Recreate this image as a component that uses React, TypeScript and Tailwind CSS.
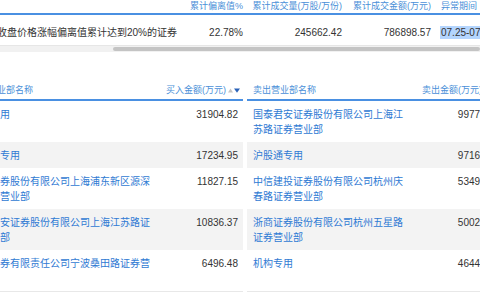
import React from "react";

const FONT = { fontFamily: '"Liberation Sans", "Noto Sans CJK SC", sans-serif' };

type Row = { buyName: string; buy: string; sellName: string; sell: string };

const ROWS: Row[] = [
  { buyName: "机构专用", buy: "31904.82", sellName: "国泰君安证券股份有限公司上海江苏路证券营业部", sell: "9977.36" },
  { buyName: "沪股通专用", buy: "17234.95", sellName: "沪股通专用", sell: "9716.28" },
  { buyName: "海通证券股份有限公司上海浦东新区源深路证券营业部", buy: "11827.15", sellName: "中信建投证券股份有限公司杭州庆春路证券营业部", sell: "5349.71" },
  { buyName: "国泰君安证券股份有限公司上海江苏路证券营业部", buy: "10836.37", sellName: "浙商证券股份有限公司杭州五星路证券营业部", sell: "5002.64" },
  { buyName: "华鑫证券有限责任公司宁波桑田路证券营业部", buy: "6496.48", sellName: "机构专用", sell: "4644.90" },
];

function SortIcon() {
  return (
    <span className="inline-flex items-center gap-[1px] ml-[2px] align-middle">
      <svg width="5" height="5" viewBox="0 0 5 5">
        <path d="M2.5 0.5 L5 4.5 L0 4.5 Z" fill="#c4c4c4" />
      </svg>
      <svg width="6" height="5" viewBox="0 0 6 5">
        <path d="M0 0.5 L6 0.5 L3 4.8 Z" fill="#2a62b8" />
      </svg>
    </span>
  );
}

export default function App() {
  return (
    <div className="w-[480px] h-[300px] overflow-hidden bg-white text-[#333]" style={FONT}>
      {/* top summary table */}
      <div className="flex text-[9px] leading-[12px] text-[#4a8fd8] border-b-2 border-[#4a90e2] h-[15px] pt-0">
        <div className="w-[183px] shrink-0" />
        <div className="w-[68px] shrink-0 text-right pr-[8px]">累计偏离值%</div>
        <div className="w-[99px] shrink-0 text-right pr-[8px]">累计成交量(万股/万份)</div>
        <div className="w-[89px] shrink-0 text-right pr-[8px]">累计成交金额(万元)</div>
        <div className="shrink-0 pl-[2px] whitespace-nowrap">异常期间</div>
      </div>
      <div className="flex text-[10px] leading-[15px] pt-[10px] pb-[5px] h-[30px]">
        <div className="w-[183px] shrink-0 flex justify-end overflow-hidden pr-[6px]">
          <span className="whitespace-nowrap shrink-0">连续三个交易日内收盘价格涨幅偏离值累计达到20%的证券</span>
        </div>
        <div className="w-[68px] shrink-0 text-right pr-[8px]">22.78%</div>
        <div className="w-[99px] shrink-0 text-right pr-[8px]">245662.42</div>
        <div className="w-[89px] shrink-0 text-right pr-[8px]">786898.57</div>
        <div className="shrink-0 pl-[1px] whitespace-nowrap">
          <span className="bg-[#b4d5fe] pl-[1px] pr-[4px] py-[1px]">07.25-07.27</span>
        </div>
      </div>
      <div className="h-[7px] bg-[#f1f1f1] border-t border-[#e6e6e6] flex items-center">
        <div className="ml-[113px] h-[4px] flex-1 rounded-full bg-[#c4c4c4]" />
      </div>

      {/* buy / sell tables */}
      <div className="mt-[30px]">
        <div className="flex text-[9px] leading-[12px] text-[#4a8fd8]">
          <div className="w-[243px] shrink-0 overflow-hidden border-b-2 border-[#4a90e2]">
            <div className="flex -ml-[30px] pt-[2px] pb-[3px]">
              <div className="w-[186px] shrink-0 whitespace-nowrap">买入营业部名称</div>
              <div className="w-[87px] shrink-0 flex justify-end items-center pr-[3px] whitespace-nowrap">
                买入金额(万元)<SortIcon />
              </div>
            </div>
          </div>
          <div className="w-[4px] shrink-0" />
          <div className="w-[252px] shrink-0 border-b-2 border-[#4a90e2]">
            <div className="flex pl-[6px] pt-[2px] pb-[3px]">
              <div className="w-[158px] shrink-0 whitespace-nowrap">卖出营业部名称</div>
              <div className="w-[88px] shrink-0 flex justify-end items-center pr-[3px] whitespace-nowrap">
                卖出金额(万元)<SortIcon />
              </div>
            </div>
          </div>
        </div>

        {ROWS.map((r, i) => {
          const bg = i % 2 === 1 ? "bg-[#f3f3f3]" : "bg-white";
          const last = i === ROWS.length - 1 ? "border-b border-[#e8e8e8]" : "";
          return (
            <div key={i} className="flex text-[10px] leading-[15px]">
              <div className={`w-[243px] shrink-0 overflow-hidden ${bg} ${last}`}>
                <div className="flex -ml-[30px] pt-[6px] pb-[5px]">
                  <div className="w-[186px] shrink-0 text-[#2f7ad3]">{r.buyName}</div>
                  <div className="w-[87px] shrink-0 text-right pr-[5px]">{r.buy}</div>
                </div>
              </div>
              <div className="w-[4px] shrink-0" />
              <div className={`w-[252px] shrink-0 ${bg} ${last}`}>
                <div className="flex pl-[6px] pt-[6px] pb-[5px]">
                  <div className="w-[158px] shrink-0 text-[#2f7ad3]">{r.sellName}</div>
                  <div className="w-[88px] shrink-0 text-right pr-[5px]">{r.sell}</div>
                </div>
              </div>
            </div>
          );
        })}
      </div>
    </div>
  );
}
